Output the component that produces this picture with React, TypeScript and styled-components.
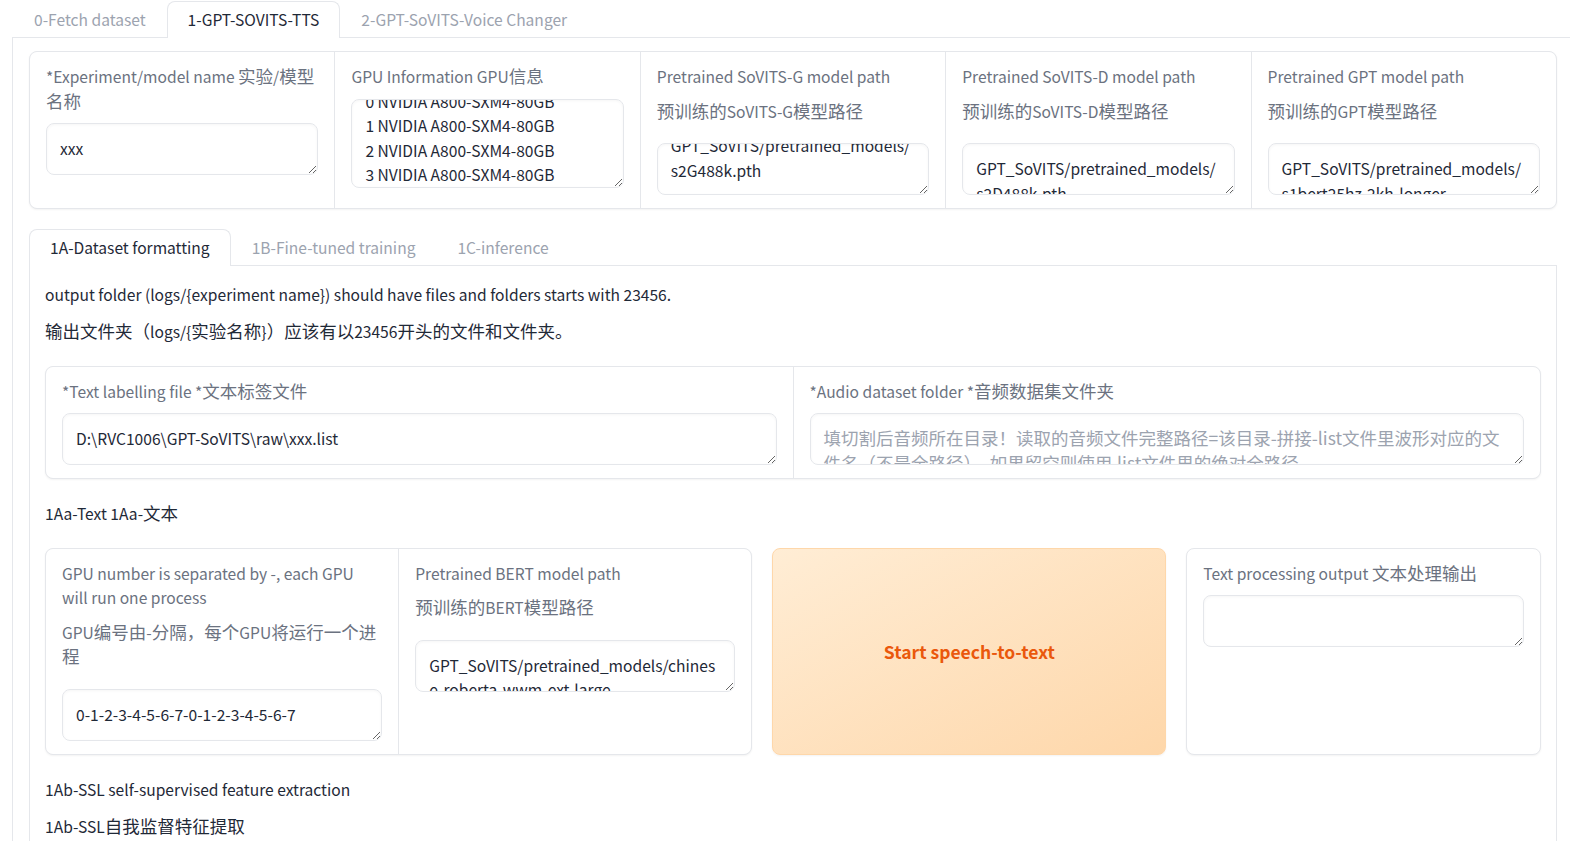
import React, { useEffect, useRef } from "react";
import styled, { createGlobalStyle } from "styled-components";

const LATIN = 15.6;
const HAN = 17.5;

const GlobalStyle = createGlobalStyle`
  html, body {
    margin: 0;
    padding: 0;
    background: #ffffff;
    overflow: hidden;
  }
  body {
    font-family: "Noto Sans CJK SC", "Noto Sans", sans-serif;
    font-size: ${LATIN}px;
    color: #1f2937;
  }
  * { box-sizing: border-box; }
`;

const Page = styled.div`
  padding-left: 12px;
  width: 1574px;
`;

const TabNav = styled.div`
  display: flex;
  padding-top: 1px;
  border-bottom: 1px solid #e5e7eb;
  height: 38px;
`;

const Tab = styled.div<{ $active?: boolean; $first?: boolean }>`
  height: 37px;
  line-height: 35px;
  padding: 0 20px;
  font-size: ${LATIN}px;
  white-space: nowrap;
  color: ${(p) => (p.$active ? "#1f2937" : "#9ca3af")};
  background: ${(p) => (p.$active ? "#ffffff" : "transparent")};
  border: 1px solid ${(p) => (p.$active ? "#e5e7eb" : "transparent")};
  border-bottom: none;
  border-radius: 8px 8px 0 0;
  margin-left: ${(p) => (p.$first ? "1px" : "0")};
`;

const Panel = styled.div<{ $pad: string }>`
  display: flex;
  flex-direction: column;
  border: 1px solid #e5e7eb;
  border-top: none;
  padding: ${(p) => p.$pad};
`;

const OuterPanel = styled(Panel)`
  gap: 19px;
  min-height: 820px;
`;

const InnerPanel = styled(Panel)`
  gap: 22px;
  min-height: 600px;
`;

const Form = styled.div<{ $cols: string }>`
  display: grid;
  grid-template-columns: ${(p) => p.$cols};
  gap: 1px;
  background: #e5e7eb;
  border: 1px solid #e5e7eb;
  border-radius: 8px;
  overflow: hidden;
  box-shadow: 0 1px 2px rgba(0, 0, 0, 0.05);
`;

const Block = styled.div`
  display: flex;
  flex-direction: column;
  background: #ffffff;
  padding: 12px 16px 13px;
  min-width: 0;
`;

const StandaloneBlock = styled(Block)`
  border: 1px solid #e5e7eb;
  border-radius: 8px;
  box-shadow: 0 1px 2px rgba(0, 0, 0, 0.05);
`;

const Label = styled.div`
  color: #6b7280;
  font-size: ${LATIN}px;
  line-height: 24.5px;
  margin-bottom: 10px;
`;

const SubLine = styled.div`
  padding: 10px 0;
`;

const Han = styled.span`
  font-size: ${HAN}px;
  line-height: 1;
`;

const Input = styled.textarea<{ $h: number }>`
  display: block;
  width: 100%;
  height: ${(p) => p.$h}px;
  margin: 0;
  padding: 12px 13px;
  border: 1px solid #e5e7eb;
  border-radius: 8px;
  background: #ffffff;
  box-shadow: inset 0 1px 3px rgba(0, 0, 0, 0.04);
  font-family: inherit;
  font-size: ${LATIN}px;
  line-height: 24.5px;
  color: #1f2937;
  resize: vertical;
  overflow: hidden;
  outline: none;

  &::placeholder {
    color: #9ca3af;
    font-size: ${HAN}px;
  }
`;

const Prose = styled.div`
  font-size: ${LATIN}px;
  line-height: 24.5px;
  color: #1f2937;
  display: flex;
  flex-direction: column;
  gap: 12.5px;

  p {
    margin: 0;
  }
`;

const ActionRow = styled.div`
  display: grid;
  grid-template-columns: 706fr 393fr 354fr;
  gap: 20px;
  align-items: stretch;
`;

const PrimaryButton = styled.button`
  border: 1px solid #fed7aa;
  border-radius: 8px;
  background: linear-gradient(to bottom right, #ffedd5, #fed7aa);
  color: #ea580c;
  font-family: inherit;
  font-size: 17.5px;
  font-weight: 600;
  box-shadow: 0 1px 2px rgba(0, 0, 0, 0.05);
  cursor: pointer;
`;

function T({ text }: { text: string }) {
  const parts = text.split(/([\u2E80-\u9FFF\u3000-\u303F\uFF00-\uFFEF]+)/);
  return (
    <>
      {parts.map((p, i) => (i % 2 ? <Han key={i}>{p}</Han> : <React.Fragment key={i}>{p}</React.Fragment>))}
    </>
  );
}

type BoxProps = {
  value?: string;
  placeholder?: string;
  height?: number;
  scroll?: number;
};

function TextBox({ value, placeholder, height = 52, scroll = 0 }: BoxProps) {
  const ref = useRef<HTMLTextAreaElement>(null);
  useEffect(() => {
    if (ref.current) ref.current.scrollTop = scroll;
  }, [scroll]);
  return (
    <Input
      ref={ref}
      readOnly
      rows={1}
      defaultValue={value}
      placeholder={placeholder}
      $h={height}
    />
  );
}

type FieldProps = BoxProps & { label: string; sub?: string };

function Field({ label, sub, ...box }: FieldProps) {
  return (
    <>
      <Label>
        <T text={label} />
        {sub && (
          <SubLine>
            <T text={sub} />
          </SubLine>
        )}
      </Label>
      <TextBox {...box} />
    </>
  );
}

const gpuInfo = Array.from({ length: 8 }, (_, i) => `${i} NVIDIA A800-SXM4-80GB`).join("\n");

const modelFields: FieldProps[] = [
  { label: "*Experiment/model name 实验/模型名称", value: "xxx" },
  { label: "GPU Information GPU信息", value: gpuInfo, height: 89, scroll: 23 },
  {
    label: "Pretrained SoVITS-G model path",
    sub: "预训练的SoVITS-G模型路径",
    value: "GPT_SoVITS/pretrained_models/s2G488k.pth",
    scroll: 24,
  },
  {
    label: "Pretrained SoVITS-D model path",
    sub: "预训练的SoVITS-D模型路径",
    value: "GPT_SoVITS/pretrained_models/s2D488k.pth",
  },
  {
    label: "Pretrained GPT model path",
    sub: "预训练的GPT模型路径",
    value: "GPT_SoVITS/pretrained_models/s1bert25hz-2kh-longer-epoch=68e-step=50232.ckpt",
  },
];

export default function App() {
  return (
    <Page>
      <GlobalStyle />
      <TabNav>
        <Tab $first>0-Fetch dataset</Tab>
        <Tab $active>1-GPT-SOVITS-TTS</Tab>
        <Tab>2-GPT-SoVITS-Voice Changer</Tab>
      </TabNav>
      <OuterPanel $pad="13px 16px 16px">
        <Form $cols="repeat(5, 1fr)">
          {modelFields.map((f) => (
            <Block key={f.label}>
              <Field {...f} />
            </Block>
          ))}
        </Form>

        <div>
          <TabNav>
            <Tab $active>1A-Dataset formatting</Tab>
            <Tab>1B-Fine-tuned training</Tab>
            <Tab>1C-inference</Tab>
          </TabNav>
          <InnerPanel $pad="16px 15px 15px">
            <Prose>
              <p>
                <T text="output folder (logs/{experiment name}) should have files and folders starts with 23456." />
              </p>
              <p>
                <T text="输出文件夹（logs/{实验名称}）应该有以23456开头的文件和文件夹。" />
              </p>
            </Prose>

            <Form $cols="1fr 1fr">
              <Block>
                <Field label="*Text labelling file *文本标签文件" value={"D:\\RVC1006\\GPT-SoVITS\\raw\\xxx.list"} />
              </Block>
              <Block>
                <Field
                  label="*Audio dataset folder *音频数据集文件夹"
                  placeholder="填切割后音频所在目录！读取的音频文件完整路径=该目录-拼接-list文件里波形对应的文件名（不是全路径）。如果留空则使用.list文件里的绝对全路径。"
                />
              </Block>
            </Form>

            <Prose>
              <p>
                <T text="1Aa-Text 1Aa-文本" />
              </p>
            </Prose>

            <ActionRow>
              <Form $cols="1fr 1fr">
                <Block>
                  <Field
                    label="GPU number is separated by -, each GPU will run one process"
                    sub="GPU编号由-分隔，每个GPU将运行一个进程"
                    value="0-1-2-3-4-5-6-7-0-1-2-3-4-5-6-7"
                  />
                </Block>
                <Block>
                  <Field
                    label="Pretrained BERT model path"
                    sub="预训练的BERT模型路径"
                    value="GPT_SoVITS/pretrained_models/chinese-roberta-wwm-ext-large"
                  />
                </Block>
              </Form>
              <PrimaryButton>Start speech-to-text</PrimaryButton>
              <StandaloneBlock>
                <Field label="Text processing output 文本处理输出" value="" />
              </StandaloneBlock>
            </ActionRow>

            <Prose>
              <p>
                <T text="1Ab-SSL self-supervised feature extraction" />
              </p>
              <p>
                <T text="1Ab-SSL自我监督特征提取" />
              </p>
            </Prose>
          </InnerPanel>
        </div>
      </OuterPanel>
    </Page>
  );
}
